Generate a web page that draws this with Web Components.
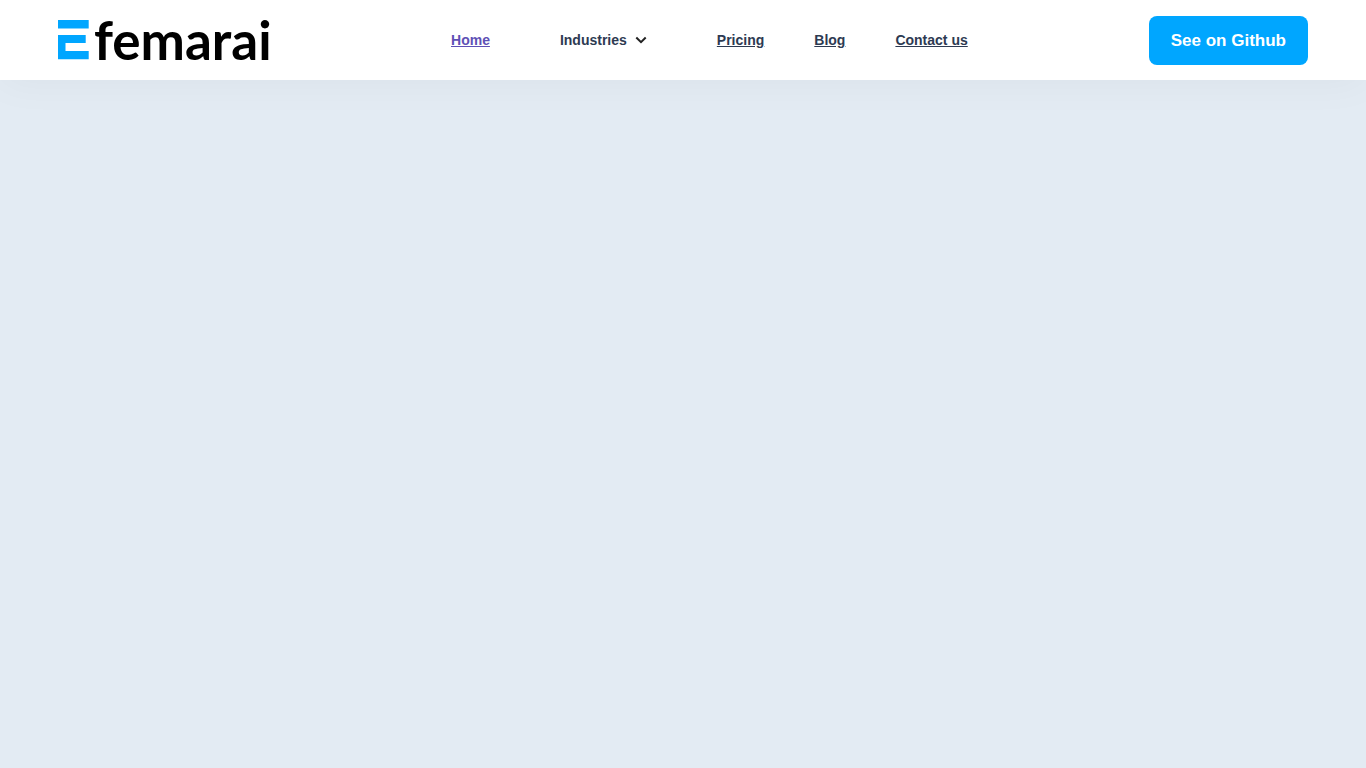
<!DOCTYPE html>
<html lang="en">
<head>
<meta charset="utf-8">
<meta name="viewport" content="width=device-width, initial-scale=1">
<title>Efemarai</title>
<style>
body { margin: 0; min-height: 100vh; background: #e3ebf3; font-family: "Liberation Sans", Arial, sans-serif; color: #2d3a52; }
</style>
</head>
<body>
<site-header>
  <brand-logo slot="brand"></brand-logo>
  <nav-link href="#home" current>Home</nav-link>
  <nav-dropdown>Industries</nav-dropdown>
  <nav-link href="#pricing">Pricing</nav-link>
  <nav-link href="#blog">Blog</nav-link>
  <nav-link href="#contact">Contact us</nav-link>
  <cta-link slot="action" href="#github">See on Github</cta-link>
</site-header>
<script>
class BaseElement extends HTMLElement {
  constructor() {
    super();
    this.attachShadow({ mode: "open" });
  }
  connectedCallback() {
    this.shadowRoot.innerHTML = this.constructor.markup;
    const link = this.shadowRoot.querySelector("a");
    if (link && this.hasAttribute("href")) link.href = this.getAttribute("href");
  }
}

class SiteHeader extends BaseElement {
  static markup = `
    <style>
      :host { display: block; background: #fff; box-shadow: 0 4px 40px rgba(0, 0, 0, 0.04); }
      header { display: flex; align-items: center; justify-content: space-between; box-sizing: border-box; min-height: 80px; padding: 0 58px; }
      nav { display: flex; align-items: center; gap: 50px; }
    </style>
    <header><slot name="brand"></slot><nav aria-label="Main"><slot></slot></nav><slot name="action"></slot></header>`;
}

class BrandLogo extends BaseElement {
  static markup = `
    <style>
      :host { display: block; width: 212px; }
      a { display: flex; align-items: center; gap: 5px; color: #000; text-decoration: none; }
      svg { display: block; flex: none; }
      span { font: 700 53px/40px Lato, sans-serif; }
    </style>
    <a href="#home" aria-label="Efemarai">
      <svg width="31" height="40" viewBox="0 0 31 40" fill="#00a6ff" aria-hidden="true">
        <path d="M0 0H30.700V8.500H0Z"/><path d="M0 15H27.700V23H7.500V31H30.700V39.300H0Z"/>
      </svg><span>femarai</span>
    </a>`;
}

class NavLink extends BaseElement {
  static markup = `
    <style>
      :host { display: block; }
      a { font-weight: 700; font-size: 14px; line-height: 20px; color: #2d3a52; }
      :host([current]) a { color: #5e50b5; }
    </style>
    <a><slot></slot></a>`;
}

class NavDropdown extends BaseElement {
  static markup = `
    <style>
      :host { display: block; padding: 0 20px; }
      button { display: flex; align-items: center; gap: 8px; padding: 0; border: 0; background: none; font: inherit; font-weight: 700; font-size: 14px; line-height: 20px; color: inherit; cursor: pointer; }
      svg { display: block; }
    </style>
    <button type="button" aria-haspopup="true" aria-expanded="false"><slot></slot>
      <svg width="12" height="8" viewBox="0 0 12 8" fill="none" stroke="#222" stroke-width="2" aria-hidden="true"><path d="M1.300 1.500 6 6.200 10.700 1.500"/></svg>
    </button>`;
}

class CtaLink extends BaseElement {
  static markup = `
    <style>
      :host { display: block; }
      a { display: block; padding: 12px 22px; border-radius: 8px; background: #00a6ff; color: #fff; font-weight: 700; font-size: 17px; line-height: 25px; text-decoration: none; }
    </style>
    <a><slot></slot></a>`;
}

customElements.define("site-header", SiteHeader);
customElements.define("brand-logo", BrandLogo);
customElements.define("nav-link", NavLink);
customElements.define("nav-dropdown", NavDropdown);
customElements.define("cta-link", CtaLink);
</script>
</body>
</html>
